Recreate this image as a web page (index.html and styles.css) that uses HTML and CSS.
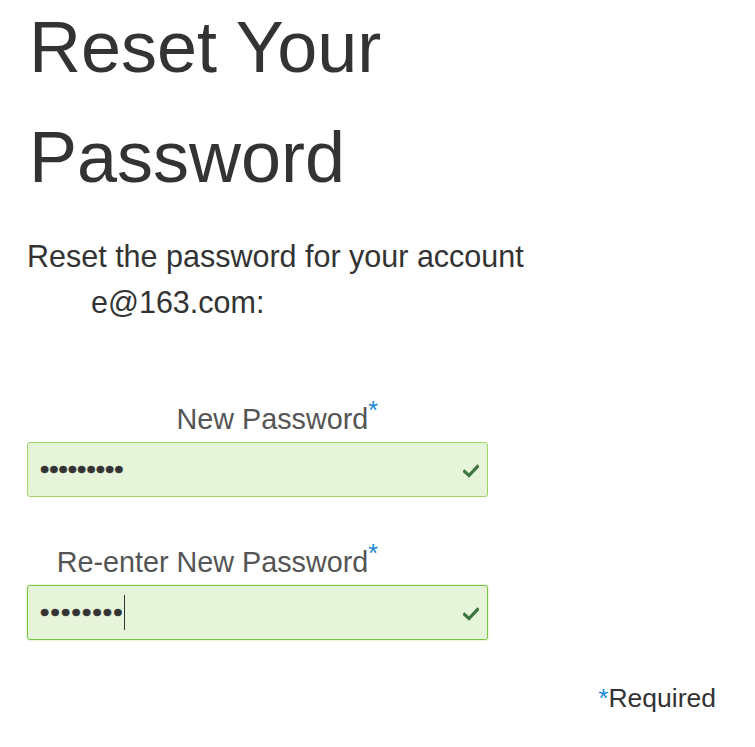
FILE: index.html
```html
<!DOCTYPE html>
<html lang="en">
<head>
<meta charset="utf-8">
<title>Reset Your Password</title>
<link rel="stylesheet" href="styles.css">
</head>
<body>
<main class="page">
  <h1 class="title">Reset Your Password</h1>
  <p class="intro">Reset the password for your account<br><span class="email">e@163.com:</span></p>
  <form class="form">
    <div class="group">
      <label class="label" id="l1">New Password<span class="req">*</span></label>
      <div class="field" role="textbox" aria-labelledby="l1">
        <span class="dots">•••••••••</span>
        <svg class="ok" viewBox="0 0 16 14" width="16" height="14" aria-hidden="true"><path d="M1.5 7.5 L6 11.5 L14.5 2.5" fill="none" stroke="#3c763d" stroke-width="3.2" stroke-linejoin="miter" stroke-linecap="square"/></svg>
      </div>
    </div>
    <div class="group">
      <label class="label" id="l2">Re-enter New Password<span class="req">*</span></label>
      <div class="field focus" role="textbox" aria-labelledby="l2">
        <span class="dots wide">••••••••</span><span class="caret"></span>
        <svg class="ok" viewBox="0 0 16 14" width="16" height="14" aria-hidden="true"><path d="M1.5 7.5 L6 11.5 L14.5 2.5" fill="none" stroke="#3c763d" stroke-width="3.2" stroke-linejoin="miter" stroke-linecap="square"/></svg>
      </div>
    </div>
    <p class="required"><span class="req-mark">*</span>Required</p>
  </form>
</main>
</body>
</html>
```
FILE: styles.css
```css
html, body {
  margin: 0;
  padding: 0;
  background: #fff;
}
body {
  font-family: "Liberation Sans", Arial, sans-serif;
  color: #333;
}
.page {
  padding: 0 39px 0 27px;
}
.title {
  font-size: 72px;
  font-weight: normal;
  line-height: 110px;
  margin: -8px 0 0 2px;
  width: 380px;
  color: #333;
}
.intro {
  font-size: 30.5px;
  line-height: 46px;
  margin: 21px 0 0 0;
  color: #333;
}
.email {
  padding-left: 64px;
}
.form {
  margin-top: 78px;
}
.group {
  display: flex;
  flex-direction: column;
  width: 461px;
  margin-bottom: 49px;
}
.label {
  display: block;
  width: 351px;
  text-align: right;
  font-size: 28.75px;
  line-height: 33px;
  color: #555;
  margin-bottom: 6px;
}
.req, .req-mark {
  color: #1a8ad6;
}
.req {
  font-size: 25px;
  vertical-align: 10px;
  line-height: 0;
}
.field {
  display: flex;
  align-items: center;
  height: 55px;
  box-sizing: border-box;
  border: 1.5px solid #9fd366;
  border-radius: 3px;
  background: #e6f4d9;
  padding: 0 8px 0 12px;
}
.field.focus {
  border-color: #7cc443;
  box-shadow: 0 0 2px rgba(124, 196, 67, 0.6);
}
.dots {
  font-family: "Liberation Sans", Arial, sans-serif;
  font-size: 26.5px;
  color: #333;
  line-height: 1;
  -webkit-text-stroke: 0.6px #333;
}
.dots.wide {
  letter-spacing: 1.2px;
}
.caret {
  width: 1.5px;
  height: 35px;
  background: #333;
}
.ok {
  flex: none;
  margin-left: auto;
  margin-top: 2px;
}
.required {
  text-align: right;
  font-size: 26.5px;
  margin: -6px 0 0 0;
  color: #333;
}
.req-mark {
  font-size: 26.5px;
}
```
